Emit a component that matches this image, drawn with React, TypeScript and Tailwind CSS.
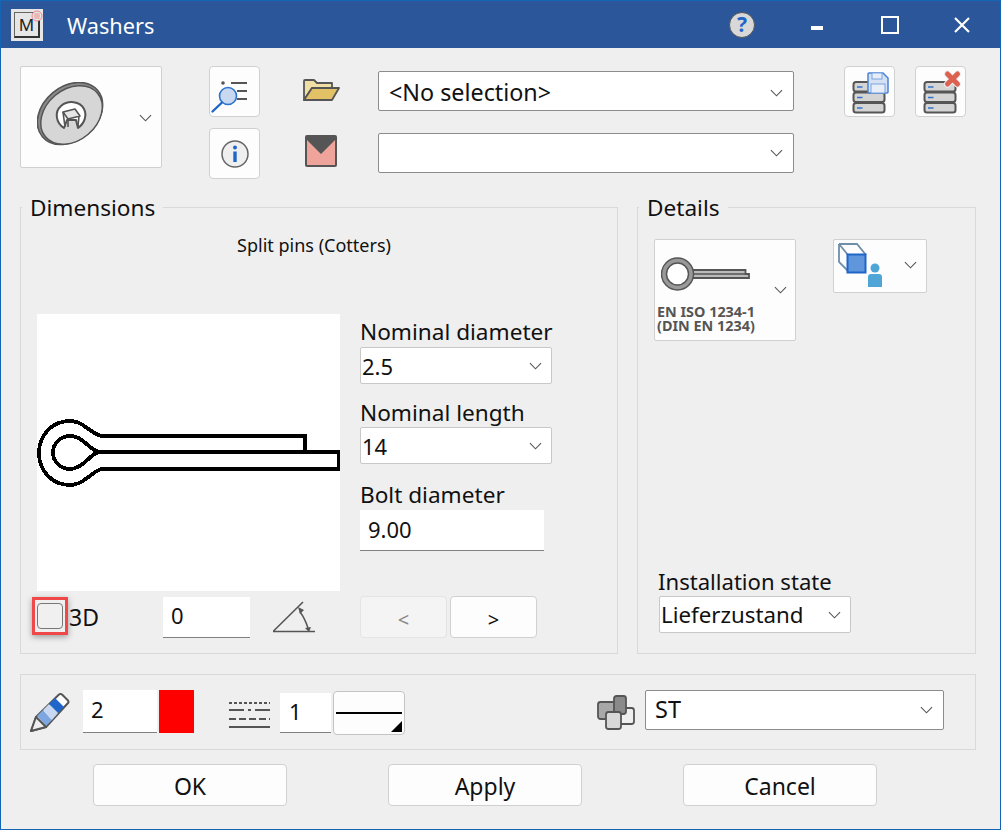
import React from 'react';

const Chevron = ({ className = '' }: { className?: string }) => (
  <svg width="13" height="8" viewBox="0 0 14 8" className={className}>
    <path d="M1 1l6 6 6-6" fill="none" stroke="#555" strokeWidth="1.2" />
  </svg>
);

const Select = ({ value, className }: { value?: string; className: string }) => (
  <div className={`flex items-center justify-between bg-white border border-[#8c8c8c] rounded-[2px] ${className}`}>
    <span className="pl-[9px] leading-none">{value}</span>
    <Chevron className="mr-[10px]" />
  </div>
);

const FlatSelect = ({ value, className }: { value: string; className: string }) => (
  <div className={`flex items-center justify-between bg-white border border-[#c8c8c8] rounded-[2px] ${className}`}>
    <span className="pl-[1px] mt-[1px] leading-none">{value}</span>
    <Chevron className="mr-[9px]" />
  </div>
);

const Field = ({ value, className }: { value: string; className: string }) => (
  <div className={`flex items-center bg-white border-b border-[#808080] pb-[3px] leading-none ${className}`}>{value}</div>
);

const IconButton = ({ children, className = '' }: { children: React.ReactNode; className?: string }) => (
  <div className={`flex items-center justify-center w-[51px] h-[51px] bg-[#fdfdfd] border border-[#d0d0d0] rounded-[4px] ${className}`}>
    {children}
  </div>
);

const Group = ({ title, className, children }: { title?: string; className: string; children: React.ReactNode }) => (
  <div className={`relative border border-[#d9d9d9] ${className}`}>
    {title && <span className="absolute left-[1px] top-[-14px] bg-[#efefef] px-[8px] text-[22.6px] leading-[28px]">{title}</span>}
    {children}
  </div>
);

const DialogButton = ({ label }: { label: string }) => (
  <div className="flex items-center justify-center w-[194px] h-[42px] pt-[2px] bg-[#fdfdfd] border border-[#d0d0d0] rounded-[4px] text-[23px]">
    {label}
  </div>
);

const Washer = () => (
  <svg width="72" height="66" viewBox="0 0 72 66" className="mb-[4px]">
    <ellipse cx="33" cy="31.500" rx="36" ry="27" transform="rotate(-40 33 31.500)" fill="#8a8a8a" stroke="#555" strokeWidth="1.600" />
    <ellipse cx="34.500" cy="33" rx="34" ry="25.500" transform="rotate(-40 34.500 33)" fill="#d6d6d6" stroke="#555" strokeWidth="1.500" />
    <path d="M27 46C19 41 17 30 24 24C31 18 43 19 47 27C50 33 48 41 41 46L39 38L30 38Z" fill="#fff" stroke="#555" strokeWidth="2" strokeLinejoin="round" />
    <path d="M26 30L38 27L43 34L31 37Z" fill="#e6e6e6" stroke="#555" strokeWidth="1.600" strokeLinejoin="round" />
    <path d="M26 30L28 45M31 37L31 45M42 34L41 44" fill="none" stroke="#555" strokeWidth="1.600" />
  </svg>
);

const SearchList = () => (
  <svg width="49" height="49" viewBox="1 1 49 49">
    <circle cx="14" cy="17" r="1.800" fill="#555" />
    <path d="M22 17h16M28 25h10M28 33h10" stroke="#555" strokeWidth="2" />
    <circle cx="19" cy="30" r="8.500" fill="#c8d8f0" stroke="#2f73cf" strokeWidth="1.600" />
    <path d="M13 36.500L3.500 45.500" stroke="#1f66c8" strokeWidth="2.400" strokeLinecap="round" />
  </svg>
);

const Info = () => (
  <svg width="28" height="28" viewBox="0 0 28 28">
    <circle cx="14" cy="14" r="13" fill="#efefef" stroke="#666" strokeWidth="1.500" />
    <circle cx="14" cy="7.500" r="2" fill="#1f66c8" />
    <rect x="12.300" y="11.500" width="3.400" height="10.500" fill="#1f66c8" />
  </svg>
);

const Folder = () => (
  <svg width="37" height="24" viewBox="0 0 37 24">
    <path d="M1 22V3a1 1 0 0 1 1-1h9l3 3h15v5H9L1 22z" fill="#f0dfa4" stroke="#555" strokeWidth="1.800" strokeLinejoin="round" />
    <path d="M9 10h27l-7 12H1z" fill="#e3c166" stroke="#555" strokeWidth="1.800" strokeLinejoin="round" />
  </svg>
);

const Envelope = () => (
  <svg width="32" height="32" viewBox="0 0 32 32">
    <rect width="32" height="32" rx="2" fill="#555" />
    <path d="M2 5l14 14L30 5v25H2z" fill="#efa49b" />
  </svg>
);

const Stack = () => (
  <>
    {[16, 26.500, 37].map((y) => (
      <g key={y}>
        <rect x="9.500" y={y} width="31" height="9.500" rx="2.500" fill="#d4d4d4" stroke="#555" strokeWidth="2" />
        <path d={`M13 ${y + 5}h5.500`} stroke="#2f73cf" strokeWidth="1.500" />
      </g>
    ))}
  </>
);

const DbSave = () => (
  <svg width="49" height="49" viewBox="1 1 49 49">
    <Stack />
    <path d="M25 7h14l5 5v14a1 1 0 0 1-1 1H25a1 1 0 0 1-1-1V8a1 1 0 0 1 1-1z" fill="#d5e0f2" stroke="#4a83d8" strokeWidth="1.500" />
    <rect x="28" y="7" width="10" height="6" fill="#e8eef8" stroke="#7ba4e0" />
    <rect x="27" y="18" width="14" height="9" fill="#e8eef8" stroke="#7ba4e0" />
  </svg>
);

const DbDelete = () => (
  <svg width="49" height="49" viewBox="1 1 49 49">
    <Stack />
    <path d="M32.500 8l10 10M42.500 8l-10 10" stroke="#efefef" strokeWidth="7" strokeLinecap="round" />
    <path d="M32.500 8l10 10M42.500 8l-10 10" stroke="#dc6150" strokeWidth="5" strokeLinecap="round" />
  </svg>
);

const CotterDrawing = () => (
  <svg width="303" height="277" viewBox="0 0 303 277" className="block" shapeRendering="crispEdges">
    <path
      d="M268 138V122H66C60 122 56 118 50 114C45 110 40 107 33 107C15 107 2 121 2 139C2 157 15 171 33 171C40 171 45 168 50 164C56 160 60 155 66 155H301.500V138H63C57 138 53 132 47 128C43 124 38 122 33 122C24 122 16 129 16 138.500C16 148 24 155 33 155C38 155 43 152 47 149C53 144 57 138 63 138"
      fill="none"
      stroke="#000"
      strokeWidth="3.800"
    />
  </svg>
);

const Angle = () => (
  <svg width="43" height="36" viewBox="0 0 43 36">
    <path d="M0 32.500L30 3M0 32.500h42" fill="none" stroke="#555" strokeWidth="1.600" />
    <path d="M27 13C31 18 33 23 35 29" fill="none" stroke="#555" strokeWidth="1.500" />
    <path d="M25 8l6 3-4 4zM32 29l6-1-2 5z" fill="#555" />
  </svg>
);

const CotterSmall = () => (
  <svg width="90" height="36" viewBox="0 0 90 36">
    <path d="M28 13h56.500v4h3.500v4H28z" fill="#bbb" stroke="#555" strokeWidth="1.800" />
    <path d="M30 17h55" stroke="#555" strokeWidth="1.500" />
    <circle cx="16.500" cy="17" r="13.500" fill="#fff" stroke="#999" strokeWidth="5" />
    <circle cx="16.500" cy="17" r="16" fill="none" stroke="#555" strokeWidth="1.500" />
    <circle cx="16.500" cy="17" r="11" fill="none" stroke="#555" strokeWidth="1.500" />
  </svg>
);

const CubeUser = () => (
  <svg width="46" height="46" viewBox="0 0 46 46">
    <path d="M1 1h18l9 11M1 1l9 11M1 1v18l9 9" fill="none" stroke="#6f8ea8" strokeWidth="1.800" />
    <rect x="9.500" y="11.500" width="18" height="18" fill="#5f96dc" stroke="#1f66c8" strokeWidth="2" />
    <circle cx="37" cy="25" r="4.500" fill="#4ea5d6" />
    <path d="M30 44V34a3 3 0 0 1 3-3h8a3 3 0 0 1 3 3v10z" fill="#4ea5d6" />
  </svg>
);

const Pencil = () => (
  <svg width="40" height="40" viewBox="0 0 40 40">
    <path d="M1 38L6 24L29 1.500Q30.500 .5 32 1.500L38 7.500Q39 9 38 10L16 34Z" fill="#fff" stroke="#555" strokeWidth="2" strokeLinejoin="round" />
    <path d="M7 23l9 10 6-6-9-10z" fill="#7ea6e0" />
    <path d="M13 17l9 10 6-7-9-9z" fill="#c8d8f0" />
    <path d="M19 11l9 9 6-6-9-9z" fill="#1f66c8" />
    <path d="M1 38L6 24L16 34Z" fill="#efefef" stroke="#555" strokeWidth="2" strokeLinejoin="round" />
  </svg>
);

const LineStyles = () => (
  <svg width="41" height="26" viewBox="0 0 41 26">
    <path d="M0 1h41" stroke="#555" strokeWidth="2" strokeDasharray="3 2" />
    <path d="M0 8h15M19 8h3M26 8h15" stroke="#555" strokeWidth="2" />
    <path d="M0 17h41" stroke="#555" strokeWidth="2" strokeDasharray="7 3" />
    <path d="M0 25h41" stroke="#555" strokeWidth="2" />
  </svg>
);

const Layers = () => (
  <svg width="38" height="35" viewBox="0 0 38 35">
    <rect x="22" y="13" width="15" height="16" rx="2.500" fill="#efefef" stroke="#555" strokeWidth="1.800" />
    <rect x="1" y="7" width="18" height="17" rx="2.500" fill="#a8a8a8" stroke="#555" strokeWidth="1.800" />
    <rect x="17" y="1" width="12" height="18" rx="2.500" fill="#8a8a8a" stroke="#555" strokeWidth="1.800" />
    <rect x="9" y="17" width="15" height="17" rx="2.500" fill="#d8d8d8" stroke="#555" strokeWidth="1.800" />
  </svg>
);

const AppLogo = () => (
  <div className="relative flex items-center justify-center w-[32px] h-[32px] bg-[#e6e6e6]">
    <div className="flex items-center justify-center w-[26px] h-[26px] border-r-2 border-b-2 border-l border-t border-r-[#333] border-b-[#333] border-l-[#666] border-t-[#666] text-[17px] font-normal leading-none text-[#222]">M</div>
    <svg width="12" height="12" viewBox="0 0 12 12" className="absolute right-0 top-[1px]">
      <circle cx="6" cy="6" r="5" fill="#e6e6e6" stroke="#e88" strokeWidth="1" />
      <path d="M3.500 4h5M3 6h6M3.500 8h5" stroke="#e88" strokeWidth="1" />
    </svg>
  </div>
);

export default function App() {
  return (
    <div className="w-[1001px] h-[830px] flex flex-col bg-[#efefef] border-x border-b border-t border-[#1565b7] text-[#111] font-['Noto_Sans','Open_Sans',sans-serif] text-[22px] overflow-hidden">
      {/* title bar */}
      <div className="flex items-center h-[47px] shrink-0 bg-[#2b579a] text-white">
        <div className="ml-[10px]"><AppLogo /></div>
        <span className="ml-[24px] mt-[3px] text-[21.7px]">Washers</span>
        <div className="ml-auto flex items-center">
          <div className="flex items-center justify-center w-[26px] h-[26px] rounded-full bg-[#d8d8d8] border border-[#555] text-[#1f66c8] font-bold text-[21px] leading-none">?</div>
          <div className="w-[12px] h-[4px] bg-white ml-[56px] mt-[6px]" />
          <div className="w-[18px] h-[18px] border-2 border-white ml-[58px]" />
          <svg width="16" height="16" viewBox="0 0 16 16" className="ml-[55px] mr-[30px]">
            <path d="M1 1l14 14M15 1L1 15" stroke="#fff" strokeWidth="2.200" />
          </svg>
        </div>
      </div>

      <div className="flex flex-col flex-1 pl-[19px] pr-[24px]">
        {/* toolbar */}
        <div className="flex mt-[18px] h-[113px]">
          <div className="flex items-center w-[142px] h-[102px] bg-[#fdfdfd] border border-[#d0d0d0] rounded-[2px]">
            <div className="ml-[16px] flex"><Washer /></div>
            <Chevron className="ml-[30px] mt-[2px]" />
          </div>
          <div className="flex flex-col gap-[11px] ml-[47px]">
            <IconButton><SearchList /></IconButton>
            <IconButton><Info /></IconButton>
          </div>
          <div className="flex flex-col ml-[43px] w-[37px] items-center">
            <div className="mt-[12px]"><Folder /></div>
            <div className="mt-[33px] mr-[1px]"><Envelope /></div>
          </div>
          <div className="flex flex-col gap-[22px] ml-[38px] mt-[5px]">
            <Select value="<No selection>" className="w-[416px] h-[40px] pt-[3px] pl-[1px] text-[23.3px]" />
            <Select className="w-[416px] h-[40px]" />
          </div>
          <IconButton className="ml-[50px]"><DbSave /></IconButton>
          <IconButton className="ml-[20px]"><DbDelete /></IconButton>
        </div>

        {/* groups */}
        <div className="flex mt-[28px] h-[447px]">
          <Group title="Dimensions" className="w-[598px] h-full">
            <p className="text-center text-[18px] leading-[22px] mt-[26px] pr-[10px]">Split pins (Cotters)</p>
            <div className="flex mt-[58px] ml-[16px]">
              <div className="w-[303px] h-[277px] bg-white"><CotterDrawing /></div>
              <div className="flex flex-col ml-[20px] text-[22.6px]">
                <span className="leading-[28px] mt-[4px]">Nominal diameter</span>
                <FlatSelect value="2.5" className="w-[192px] h-[37px] mt-[1px] text-[22px]" />
                <span className="leading-[28px] mt-[15px]">Nominal length</span>
                <FlatSelect value="14" className="w-[192px] h-[37px] text-[22px]" />
                <span className="leading-[28px] mt-[17px]">Bolt diameter</span>
                <Field value="9.00" className="w-[184px] h-[41px] pl-[8px] text-[22px] mt-[1px]" />
              </div>
            </div>
            <div className="flex items-center mt-[5px] ml-[11px]">
              <div className="flex items-center justify-center w-[36px] h-[38px] mb-[3px] border-[3px] border-[#f04848] shadow-[0_2px_6px_rgba(0,0,0,0.35)]">
                <div className="w-[26px] h-[26px] border-[1.5px] border-[#777] rounded-[4px] bg-[#f0f0f0]" />
              </div>
              <span className="ml-[1px] w-[94px] text-[23px]">3D</span>
              <Field value="0" className="w-[87px] h-[41px] pl-[8px] text-[22px]" />
              <div className="ml-[23px] flex"><Angle /></div>
              <div className="flex items-center justify-center w-[87px] h-[42px] pt-[6px] ml-[44px] bg-[#f4f4f4] border border-[#e4e4e4] rounded-[4px] text-[#888] text-[20px]">&lt;</div>
              <div className="flex items-center justify-center w-[87px] h-[42px] pt-[6px] ml-[3px] bg-[#fdfdfd] border border-[#d0d0d0] rounded-[4px] text-[20px]">&gt;</div>
            </div>
          </Group>

          <Group title="Details" className="w-[339px] h-full ml-[19px] flex flex-col">
            <div className="flex mt-[31px] ml-[16px]">
              <div className="relative w-[142px] h-[102px] bg-[#fdfdfd] border border-[#d0d0d0] rounded-[2px]">
                <div className="ml-[6px] mt-[17px] flex"><CotterSmall /></div>
                <Chevron className="absolute right-[8px] top-[46px]" />
                <p className="ml-[2px] mt-[12px] text-[14.400px] leading-[14px] font-bold text-[#555]">EN ISO 1234-1<br />(DIN EN 1234)</p>
              </div>
              <div className="flex items-center w-[94px] h-[54px] ml-[37px] bg-[#fdfdfd] border border-[#d0d0d0] rounded-[2px]">
                <div className="ml-[4px] flex"><CubeUser /></div>
                <Chevron className="ml-[20px] mb-[2px]" />
              </div>
            </div>
            <div className="flex flex-col mt-auto mb-[20px] ml-[21px]">
              <span className="leading-[28px] mb-[1px] text-[22.100px] -ml-[1px]">Installation state</span>
              <FlatSelect value="Lieferzustand" className="w-[192px] h-[37px] text-[22.300px]" />
            </div>
          </Group>
        </div>

        {/* line attributes */}
        <Group className="flex items-center mt-[20px] w-[956px] h-[76px]">
          <div className="ml-[9px] mt-[1px] flex"><Pencil /></div>
          <Field value="2" className="w-[74px] h-[43px] ml-[13px] mb-[2px] pl-[8px] text-[22px]" />
          <div className="w-[35px] h-[43px] ml-[2px] mb-[2px] bg-[#ff0000]" />
          <div className="ml-[35px] mt-[5px] flex"><LineStyles /></div>
          <Field value="1" className="w-[51px] h-[40px] ml-[10px] mt-[2px] pl-[9px] text-[22px]" />
          <div className="relative flex items-center w-[72px] h-[44px] ml-[2px] mt-[2px] px-[2px] bg-[#fdfdfd] border border-[#c4c4c4] rounded-[4px]">
            <div className="w-full h-[2px] bg-black" />
            <div className="absolute right-[2px] bottom-[2px] w-0 h-0 border-l-[11px] border-b-[11px] border-l-transparent border-b-black" />
          </div>
          <div className="ml-[192px] mt-[1px] flex"><Layers /></div>
          <Select value="ST" className="w-[299px] h-[40px] ml-[10px] mb-[5px] text-[23.500px]" />
        </Group>

        {/* footer */}
        <div className="flex mt-[14px] ml-[73px] gap-[101px]">
          <DialogButton label="OK" />
          <DialogButton label="Apply" />
          <DialogButton label="Cancel" />
        </div>
      </div>
    </div>
  );
}
